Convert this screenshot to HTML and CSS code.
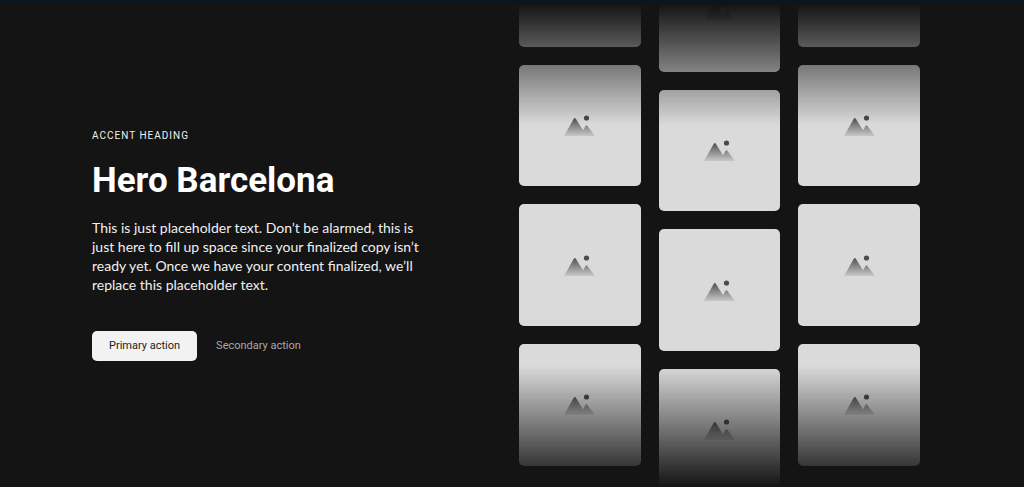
FILE: index.html
```html
<!DOCTYPE html>
<html lang="en">
<head>
<meta charset="utf-8">
<meta name="viewport" content="width=device-width, initial-scale=1">
<title>Hero Barcelona</title>
<link rel="stylesheet" href="styles.css">
</head>
<body>
<svg width="0" height="0" class="defs" aria-hidden="true">
  <defs>
    <linearGradient id="slope" x1="0" y1="2" x2="0" y2="21" gradientUnits="userSpaceOnUse">
      <stop offset="0" stop-color="#4a4a4a"/>
      <stop offset="1" stop-color="#c8c8c8"/>
    </linearGradient>
    <symbol id="picture" viewBox="0 0 31 21">
      <path fill="url(#slope)" d="M0 21 9.900 3.600Q10.800 2.400 11.700 3.600L19 15.200 21.700 10.600Q22.400 9.700 23.100 10.600L31 21Z"/>
      <circle cx="22.500" cy="3" r="2.600" fill="#4a4a4a"/>
    </symbol>
  </defs>
</svg>
<main class="hero">
  <section class="copy">
    <p class="accent">ACCENT HEADING</p>
    <h1 class="title">Hero Barcelona</h1>
    <p class="text">This is just placeholder text. Don’t be alarmed, this is just here to fill up space since your finalized copy isn’t ready yet. Once we have your content finalized, we’ll replace this placeholder text.</p>
    <div class="actions">
      <button type="button" class="button primary">Primary action</button>
      <button type="button" class="button secondary">Secondary action</button>
    </div>
  </section>
  <div class="gallery">
    <div class="column">
      <div class="tile"><svg class="icon"><use href="#picture"/></svg></div>
      <div class="tile"><svg class="icon"><use href="#picture"/></svg></div>
      <div class="tile"><svg class="icon"><use href="#picture"/></svg></div>
      <div class="tile"><svg class="icon"><use href="#picture"/></svg></div>
    </div>
    <div class="column lowered">
      <div class="tile"><svg class="icon"><use href="#picture"/></svg></div>
      <div class="tile"><svg class="icon"><use href="#picture"/></svg></div>
      <div class="tile"><svg class="icon"><use href="#picture"/></svg></div>
      <div class="tile"><svg class="icon"><use href="#picture"/></svg></div>
    </div>
    <div class="column">
      <div class="tile"><svg class="icon"><use href="#picture"/></svg></div>
      <div class="tile"><svg class="icon"><use href="#picture"/></svg></div>
      <div class="tile"><svg class="icon"><use href="#picture"/></svg></div>
      <div class="tile"><svg class="icon"><use href="#picture"/></svg></div>
    </div>
  </div>
</main>
</body>
</html>
```
FILE: styles.css
```css
* { box-sizing: border-box; }

body {
  margin: 0;
  background: #141414;
  color: #fff;
  font-family: Roboto, "Liberation Sans", Arial, sans-serif;
}

.defs { position: absolute; }

.hero {
  display: grid;
  grid-template-columns: 1fr 401px;
  height: 100vh;
  min-height: 400px;
  padding: 0 104px 0 92px;
  border-top: 4px solid #0b151d;
  overflow: hidden;
}

.copy {
  align-self: center;
  max-width: 332px;
}

.accent {
  margin: 0 0 17px;
  font-size: 10px;
  line-height: 16px;
  letter-spacing: 1px;
  color: #f0f0f0;
}

.title {
  margin: 0 0 17px;
  font-size: 35px;
  line-height: 40px;
  font-weight: 700;
  white-space: nowrap;
}

.text {
  margin: 0 0 37px;
  font-family: Lato, Roboto, sans-serif;
  font-size: 14px;
  line-height: 19px;
  color: #f0f0f0;
}

.actions {
  display: flex;
  gap: 2px;
  padding-bottom: 3px;
}

.button {
  height: 30px;
  padding: 0 17px;
  border: 0;
  border-radius: 5px;
  font: inherit;
  font-size: 11px;
  white-space: nowrap;
}

.primary { background: #f2f2f2; color: #222; }
.secondary { background: transparent; color: #a8a8a8; }

.gallery {
  display: grid;
  grid-template-columns: repeat(3, 1fr);
  gap: 18px;
  min-height: 0;
  overflow: hidden;
  mask-image: linear-gradient(transparent, #000 25%, #000 75%, transparent);
}

.column {
  display: flex;
  flex-direction: column;
  gap: 18px;
  margin-top: -79px;
}

.lowered { margin-top: -54px; }

.tile {
  display: grid;
  place-items: center;
  flex: none;
  aspect-ratio: 1;
  border-radius: 5px;
  background: #dadada;
}

.icon { width: 31px; height: 21px; }
```
